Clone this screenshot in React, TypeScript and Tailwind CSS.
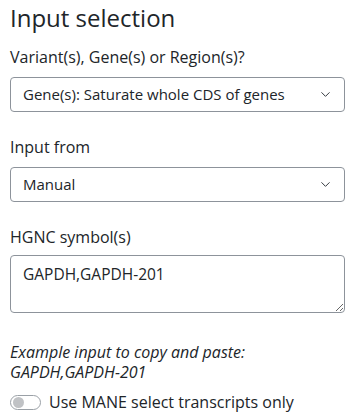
import { ChevronDown } from "lucide-react";

function Select({ value }: { value: string }) {
  return (
    <div className="flex items-center justify-between h-[35px] rounded-[4px] border border-[#8d939b] bg-white pl-[12px] pr-[11px]">
      <span className="text-[15px] text-[#212529]">{value}</span>
      <ChevronDown className="size-[15px] text-[#343a40]" strokeWidth={1.6} />
    </div>
  );
}

export default function App() {
  return (
    <div className="w-[353px] h-[420px] overflow-hidden bg-white pl-[10px] pr-[8px] text-[#212529]" style={{ fontFamily: '"Open Sans", sans-serif' }}>
      <h2 className="text-[24px] leading-[35px]">Input selection</h2>

      <p className="text-[16px] leading-[24px] mt-[10px]">Variant(s), Gene(s) or Region(s)?</p>
      <div className="mt-[8px]">
        <Select value="Gene(s): Saturate whole CDS of genes" />
      </div>

      <p className="text-[16px] leading-[24px] mt-[23px]">Input from</p>
      <div className="mt-[8px]">
        <Select value="Manual" />
      </div>

      <p className="text-[16px] leading-[24px] mt-[23px]">HGNC symbol(s)</p>
      <textarea
        className="mt-[6px] block w-full h-[58px] rounded-[4px] border border-[#8d939b] px-[12px] py-[6px] text-[15.5px] leading-[24px] text-[#212529] outline-none"
        defaultValue="GAPDH,GAPDH-201"
      />

      <p className="italic text-[16px] leading-[20px] mt-[29px]">
        Example input to copy and paste:
        <br />
        GAPDH,GAPDH-201
      </p>

      <div className="flex items-center gap-[8px] mt-[8px]">
        <div className="w-[31px] h-[15px] rounded-full border border-[#9aa0a6] flex items-center px-[2px]">
          <div className="w-[11px] h-[11px] rounded-full bg-[#c0c2c5]" />
        </div>
        <span className="text-[16px] leading-[24px]">Use MANE select transcripts only</span>
      </div>
    </div>
  );
}
